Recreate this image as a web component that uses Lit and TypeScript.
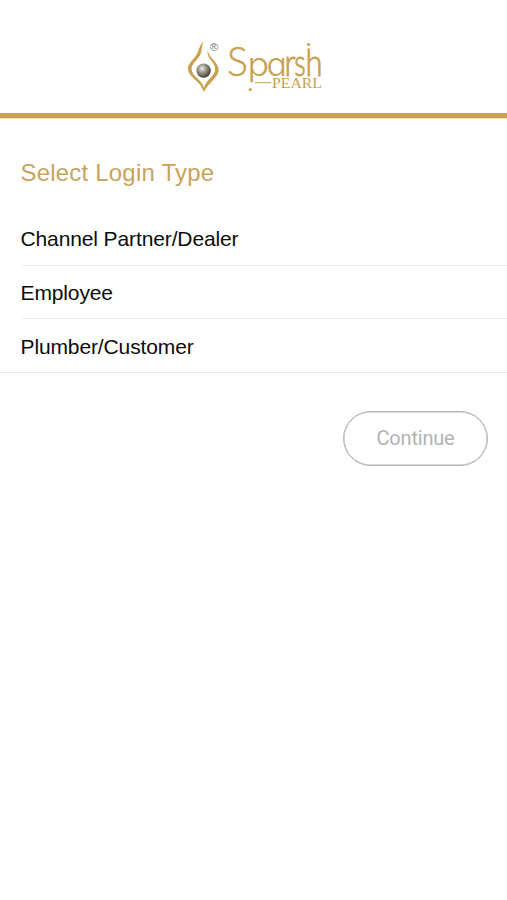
import { LitElement, html, svg, css } from "lit";
import { customElement, state } from "lit/decorators.js";

// Wordmark letters: character, left edge, advance width, style class
const LETTERS: [string, number, number, string][] = [
  ["S", 227, 21, "cap"],
  ["p", 247.6, 21.6, "round"],
  ["a", 266.6, 20.4, "round"],
  ["r", 284.6, 11, "thin"],
  ["s", 294.2, 11.4, "thin"],
  ["h", 305.4, 17, "thin"],
];

@customElement("brand-logo")
class BrandLogo extends LitElement {
  static styles = css`
    :host { display: block; width: 140px; height: 56px; }
    svg { display: block; }
    .gold { fill: #c8a04f; }
    .word { stroke: #c8a04f; stroke-width: 0.4px; }
    .cap { font: 300 40.500px Lato, sans-serif; }
    .thin { font: 300 37px Lato, sans-serif; stroke-width: 0.9px; }
    .round { font: 300 33px Inter, sans-serif; font-feature-settings: "cv11" 1; stroke-width: 0; }
    .sub { font: 400 15px "Liberation Serif", serif; }
    .reg { font: 400 11.500px "Liberation Sans", sans-serif; fill: #777; }
  `;
  render() {
    return html`<svg width="140" height="56" viewBox="185 38 140 56">
      <defs>
        <radialGradient id="pearl" cx="40%" cy="36%" r="66%">
          <stop offset="0" stop-color="#f0eee9" />
          <stop offset="0.35" stop-color="#aaa69c" />
          <stop offset="0.75" stop-color="#68635a" />
          <stop offset="1" stop-color="#3a352d" />
        </radialGradient>
      </defs>
      <path class="gold" d="M204 41.500C198.500 45 200 50 196 55.500C192 61 188 63.500 188 68.500C188 74 193.500 78 198 82.500C201.500 86 202.500 89 203.800 92C204.800 88 203.800 85.500 200.500 81.500C196.500 77 191.600 74 191.600 69C191.600 64.500 195.500 61.500 199 57C203 51.500 200.500 46 204 41.500Z" />
      <path class="gold" d="M207.800 50C207 54.500 208.800 57.500 211.500 61C214 64.200 215.400 66.500 215.200 70C214.800 74.500 210 78 206.800 82C204.400 85 203.700 88 203.800 92C206 87 209.500 84 213 80.200C216.300 76.500 218.800 73.500 218.600 69.500C218.300 65.500 216 63 213 59.500C210.200 56.200 208.200 54 207.800 50Z" />
      <circle cx="203.600" cy="70.600" r="7.200" fill="url(#pearl)" />
      <text class="reg" x="209.800" y="51">®</text>
      ${LETTERS.map(([ch, x, w, cls]) => svg`<text class="gold word ${cls}" x=${x} y="76.300" textLength=${w} lengthAdjust="spacingAndGlyphs">${ch}</text>`)}
      <circle class="gold" cx="308.600" cy="44.500" r="1.600" />
      <circle class="gold" cx="250.300" cy="89.500" r="1.600" />
      <rect class="gold" x="255" y="82.200" width="16" height="1" />
      <text class="gold sub" x="272" y="88" textLength="50" lengthAdjust="spacingAndGlyphs">PEARL</text>
    </svg>`;
  }
}

@customElement("app-root")
class AppRoot extends LitElement {
  static styles = css`
    :host { display: block; min-height: 900px; background: #fff; font-family: "Liberation Sans", Arial, sans-serif; }
    header { box-sizing: border-box; height: 118px; padding-top: 38px; border-bottom: 5px solid #c9a152; display: flex; justify-content: center; box-shadow: 0 1px 0 #f0e2c6; }
    brand-logo { margin-left: 3px; }
    h1 { margin: 0; padding: 41px 20.500px 0; height: 53px; font-weight: 400; font-size: 24px; line-height: 28px; color: #c9a35b; letter-spacing: 0.2px; }
    ul { list-style: none; margin: 0; padding: 0 0 0 20.500px; border-bottom: 1px solid #e9e9e9; }
    li { box-sizing: border-box; height: 53.500px; line-height: 53px; font-size: 21px; color: #0c0c0c; letter-spacing: -0.12px; border-bottom: 1px solid #ececec; cursor: pointer; }
    li:last-child { height: 52.500px; line-height: 55px; border-bottom: 0; }
    .actions { display: flex; justify-content: flex-end; padding: 38px 19px 0 0; }
    button { box-sizing: border-box; width: 145px; height: 55px; border: 1px solid #b5b5b5; box-shadow: inset 0 0 0 0.500px #b5b5b5; border-radius: 28px; background: #fff; color: #b3b3b3; font: 400 20px Roboto, sans-serif; letter-spacing: -0.2px; padding: 0 0 1px; }
  `;
  @state() private types = ["Channel Partner/Dealer", "Employee", "Plumber/Customer"];
  render() {
    return html`
      <header><brand-logo></brand-logo></header>
      <main>
        <h1>Select Login Type</h1>
        <ul>${this.types.map((t) => html`<li>${t}</li>`)}</ul>
        <div class="actions"><button disabled>Continue</button></div>
      </main>`;
  }
}
